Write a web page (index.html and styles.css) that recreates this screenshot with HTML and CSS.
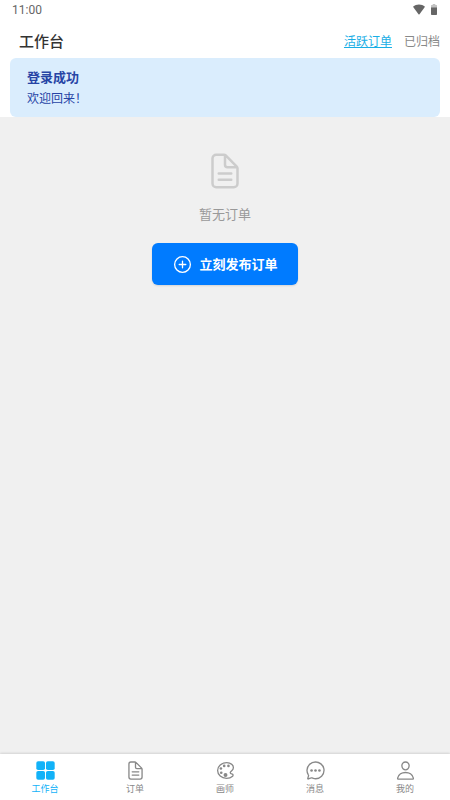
FILE: index.html
```html
<!DOCTYPE html>
<html lang="zh-CN">
<head>
  <meta charset="utf-8">
  <meta name="viewport" content="width=device-width, initial-scale=1">
  <title>工作台</title>
  <link rel="stylesheet" href="styles.css">
</head>
<body>
  <div class="status">
    <time class="clock">11:00</time>
    <div class="status-icons">
      <svg width="12" height="11" viewBox="0 0 12 11" aria-hidden="true"><path d="M0 2.8C3.4-.3 8.6-.3 12 2.8L6.5 10.2Q6 10.8 5.5 10.2Z"/></svg>
      <svg width="6" height="11" viewBox="0 0 6 11" aria-hidden="true"><path d="M1.7 0h2.6v1H5.5Q6 1 6 1.5V4H0V1.5Q0 1 .5 1h1.2z" opacity=".4"/><path d="M0 3.4h6v6.8q0 .8-.8.8H.8Q0 11 0 10.200z"/></svg>
    </div>
  </div>
  <header class="header">
    <h1 class="title">工作台</h1>
    <nav class="filters">
      <a class="filter filter-active" href="#active">活跃订单</a>
      <a class="filter" href="#archived">已归档</a>
    </nav>
    <div class="toast" role="status">
      <strong class="toast-title">登录成功</strong>
      <span class="toast-text">欢迎回来！</span>
    </div>
  </header>
  <main class="empty">
    <svg class="empty-icon" viewBox="0 0 512 512" aria-hidden="true"><path d="M416 221.250V416a48 48 0 0 1-48 48H144a48 48 0 0 1-48-48V96a48 48 0 0 1 48-48h98.750a32 32 0 0 1 22.620 9.370l141.260 141.260a32 32 0 0 1 9.370 22.620zM256 56v120a32 32 0 0 0 32 32h120M176 288h160M176 368h160"/></svg>
    <p class="empty-text">暂无订单</p>
    <button class="publish" type="button">
      <svg class="publish-icon" viewBox="0 0 512 512" aria-hidden="true"><circle cx="256" cy="256" r="192"/><path d="M256 176v160M336 256H176"/></svg>
      立刻发布订单
    </button>
  </main>
  <nav class="tabs">
    <a class="tab tab-active" href="#home">
      <svg class="tab-icon solid" viewBox="0 0 512 512" aria-hidden="true"><rect x="32" y="32" width="212" height="212" rx="44"/><rect x="268" y="32" width="212" height="212" rx="44"/><rect x="32" y="268" width="212" height="212" rx="44"/><rect x="268" y="268" width="212" height="212" rx="44"/></svg>
      工作台
    </a>
    <a class="tab" href="#orders">
      <svg class="tab-icon" viewBox="0 0 512 512" aria-hidden="true"><path d="M416 221.250V416a48 48 0 0 1-48 48H144a48 48 0 0 1-48-48V96a48 48 0 0 1 48-48h98.750a32 32 0 0 1 22.620 9.370l141.260 141.260a32 32 0 0 1 9.370 22.620zM256 56v120a32 32 0 0 0 32 32h120M176 288h160M176 368h160"/></svg>
      订单
    </a>
    <a class="tab" href="#artists">
      <svg class="tab-icon" viewBox="0 0 512 512" aria-hidden="true"><path d="M430.110 347.900c-6.600-6.100-16.300-7.600-24.600-9-11.500-1.900-15.900-4-22.600-10-14.300-12.700-14.300-31.100 0-43.800l30.300-26.900c46.400-41 46.400-108.200 0-149.200-34.200-30.100-80.100-45-127.800-45-55.700 0-113.900 20.300-158.800 60.100-83.500 73.800-83.500 194.700 0 268.500 41.500 36.700 97.500 55 152.900 55.400h1.700c55.400 0 110-17.900 148.800-52.400 14.400-12.700 11.990-36.600.1-47.700z"/><g class="dots"><circle cx="144" cy="208" r="32"/><circle cx="152" cy="311" r="32"/><circle cx="224" cy="144" r="32"/><circle cx="256" cy="367" r="48"/><circle cx="328" cy="144" r="32"/></g></svg>
      画师
    </a>
    <a class="tab" href="#messages">
      <svg class="tab-icon" viewBox="0 0 512 512" aria-hidden="true"><path d="M87.480 380c1.200-4.380-1.430-10.470-3.940-14.860a42.630 42.630 0 0 0-2.540-3.800 199.810 199.810 0 0 1-33-110C47.640 139.090 140.720 48 255.820 48 356.200 48 440 117.540 459.570 209.850a199 199 0 0 1 4.430 41.640c0 112.410-89.490 204.930-204.590 204.930-18.310 0-43-4.600-56.470-8.370s-26.920-8.770-30.390-10.110a31.140 31.140 0 0 0-11.130-2.070 30.700 30.700 0 0 0-12.080 2.430L81.500 462.780a15.920 15.920 0 0 1-4.660 1.220 9.610 9.610 0 0 1-9.580-9.740 15.850 15.850 0 0 1 .6-3.290z"/><g class="dots"><circle cx="160" cy="256" r="32"/><circle cx="256" cy="256" r="32"/><circle cx="352" cy="256" r="32"/></g></svg>
      消息
    </a>
    <a class="tab" href="#me">
      <svg class="tab-icon" viewBox="0 0 512 512" aria-hidden="true"><path d="M344 144c-3.920 52.870-44 96-88 96s-84.150-43.120-88-96c-4-55 35-96 88-96s92 42 88 96zM256 304c-87 0-175.300 48-191.640 138.600C62.390 453.520 68.570 464 80 464h352c11.440 0 17.620-10.480 15.650-21.400C431.300 352 343 304 256 304z"/></svg>
      我的
    </a>
  </nav>
</body>
</html>
```

FILE: styles.css
```css
* {
  box-sizing: border-box;
}

body {
  display: flex;
  flex-direction: column;
  min-height: 100vh;
  margin: 0;
  background: #f0f0f0;
  font-family: "Noto Sans CJK SC", sans-serif;
}

a {
  color: inherit;
  text-decoration: none;
}

.status {
  display: flex;
  align-items: flex-start;
  justify-content: space-between;
  height: 20px;
  padding: 0 13px 0 12px;
  background: #fff;
  color: #666;
}

.clock {
  font: 400 12px/20px Roboto, sans-serif;
}

.status-icons {
  display: flex;
  gap: 6px;
  padding-top: 4px;
  fill: #666;
}

.header {
  position: relative;
  display: flex;
  align-items: flex-start;
  justify-content: space-between;
  height: 97px;
  padding: 10px 10px 0 19px;
  background: #fff;
}

.title {
  margin: 0;
  color: #333;
  font-size: 15px;
  font-weight: 500;
  line-height: 22px;
}

.filters {
  display: flex;
  gap: 12px;
  color: #888;
  font-size: 12px;
  line-height: 22px;
}

.filter-active {
  color: #1aaee5;
  text-decoration: underline;
}

/* Notification that floats over the header */
.toast {
  position: absolute;
  top: 38px;
  right: 10px;
  left: 10px;
  display: flex;
  flex-direction: column;
  gap: 2px;
  padding: 9px 17px 10px;
  border-radius: 6px;
  background: #daedfd;
  color: #2744a5;
}

.toast-title {
  font-size: 13px;
  font-weight: 700;
  line-height: 20px;
}

.toast-text {
  font-size: 12px;
  line-height: 18px;
}

.empty {
  flex: 1;
  display: flex;
  flex-direction: column;
  align-items: center;
  padding-top: 34px;
}

.empty-icon,
.publish-icon,
.tab-icon {
  fill: none;
  stroke: currentColor;
  stroke-width: 32;
  stroke-linecap: round;
  stroke-linejoin: round;
}

.empty-icon {
  width: 40px;
  height: 40px;
  color: #ccc;
}

.empty-text {
  margin: 13px 0 19px;
  color: #999;
  font-size: 13px;
  line-height: 20px;
}

.publish {
  display: flex;
  align-items: center;
  gap: 6px;
  height: 42px;
  padding: 0 20px;
  border: 0;
  border-radius: 6px;
  background: #007bff;
  box-shadow: 0 1px 2px rgba(0, 0, 0, 0.12);
  color: #fff;
  font-family: inherit;
  font-size: 13px;
  font-weight: 700;
  line-height: 20px;
}

.publish-icon {
  width: 21px;
  height: 21px;
}

.tabs {
  display: flex;
  height: 46px;
  padding-top: 6px;
  background: #fff;
  box-shadow: 0 -1px 2px rgba(0, 0, 0, 0.12);
}

.tab {
  flex: 1;
  display: flex;
  flex-direction: column;
  align-items: center;
  gap: 1px;
  color: #888;
  font-size: 9px;
  line-height: 14px;
}

.tab-active {
  color: #12b2f8;
}

.tab-icon {
  width: 21px;
  height: 21px;
}

.solid,
.dots {
  fill: currentColor;
  stroke: none;
}
```
